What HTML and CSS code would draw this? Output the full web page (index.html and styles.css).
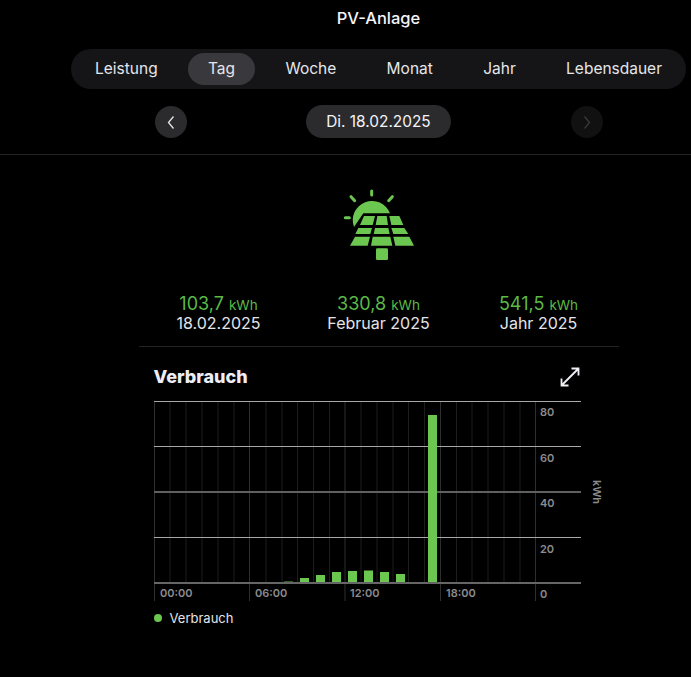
FILE: index.html
```html
<!DOCTYPE html>
<html lang="de">
<head>
<meta charset="utf-8">
<title>PV-Anlage</title>
<link rel="stylesheet" href="styles.css">
</head>
<body>
<div class="column">
  <h1 class="title">PV-Anlage</h1>
  <nav class="tabs">
    <span class="tab">Leistung</span>
    <span class="tab active">Tag</span>
    <span class="tab">Woche</span>
    <span class="tab">Monat</span>
    <span class="tab">Jahr</span>
    <span class="tab">Lebensdauer</span>
  </nav>
  <div class="datebar">
    <span class="round">
      <svg width="32" height="32" viewBox="0 0 32 32"><path class="chev" d="M18.5 10.5 L13.5 16.500 L18.500 22.500"/></svg>
    </span>
    <span class="date">Di. 18.02.2025</span>
    <span class="round off">
      <svg width="32" height="32" viewBox="0 0 32 32"><path class="chev dim" d="M13.500 10.500 L18.500 16.500 L13.500 22.500"/></svg>
    </span>
  </div>
</div>
<hr class="rule">
<div class="column">
  <div class="hero">
    <svg class="panel" width="120" height="90" viewBox="0 0 360 270">
      <path d="M102 141 A55 55 0 1 1 210 100 L130 100 Z"/>
      <path d="M132 108H165L158 135H120Z M172 108H200L204 135H167Z M208 108H238L250 135H214Z M115 144H156L151 162H106Z M165 144H205L209 162H161Z M214 144H253L265 162H220Z M105 170H150L143 197H90Z M158 170H211L217 197H153Z M220 170H268L282 197H226Z"/>
      <rect x="168" y="205" width="36" height="35" rx="4"/>
      <path class="ray" d="M155 33V45 M93 50L104 62 M217 50L206 62 M76 113H88"/>
    </svg>
  </div>
  <div class="body">
    <div class="stats">
      <div class="stat"><div class="val">103,7 <small>kWh</small></div><div class="lab">18.02.2025</div></div>
      <div class="stat"><div class="val">330,8 <small>kWh</small></div><div class="lab">Februar 2025</div></div>
      <div class="stat"><div class="val">541,5 <small>kWh</small></div><div class="lab">Jahr 2025</div></div>
    </div>
    <div class="card">
      <div class="cardhead">
        <h2 class="cardtitle">Verbrauch</h2>
        <svg width="22" height="22" viewBox="0 0 22 22"><path class="expand" d="M2.500 19.500 L19.500 2.500 M12.500 2.500 H19.500 V9.500 M2.500 12.500 V19.500 H9.500"/></svg>
      </div>
      <svg class="chart" width="480" height="204" viewBox="154 400 480 204">
        <g class="vgrid">
          <path d="M170 401V583M186 401V583M202 401V583M218 401V583M234 401V583M266 401V583M282 401V583M297.500 401V583M313.500 401V583M329.500 401V583M361 401V583M377 401V583M393 401V583M408.500 401V583M424.500 401V583M456.500 401V583M472 401V583M488 401V583M504 401V583M520 401V583"/>
        </g>
        <g class="major">
          <path d="M154.500 401V601M249.500 401V601M345 401V601M440.500 401V601M535.500 401V601"/>
        </g>
        <path class="hgrid" d="M154 401.500H581M154 446.500H581M154 537.500H581"/>
        <path class="hgrid mid" d="M154 492H581"/>
        <g class="bars">
          <rect class="faint" x="284" y="581" width="9" height="2"/>
          <rect x="300" y="578" width="9" height="5"/>
          <rect x="316" y="575" width="9" height="8"/>
          <rect x="332" y="572" width="9" height="11"/>
          <rect x="348" y="571" width="9" height="12"/>
          <rect x="364" y="570.500" width="9" height="12.500"/>
          <rect x="380" y="572" width="9" height="11"/>
          <rect x="396" y="574" width="9" height="9"/>
          <rect x="428" y="415" width="9" height="168"/>
        </g>
        <path class="axis" d="M154 583H581"/>
        <g class="ticks">
          <text x="160" y="597">00:00</text>
          <text x="255" y="597">06:00</text>
          <text x="350" y="597">12:00</text>
          <text x="446" y="597">18:00</text>
          <text x="540" y="416">80</text>
          <text x="540" y="462">60</text>
          <text x="540" y="507">40</text>
          <text x="540" y="553">20</text>
          <text x="540" y="598">0</text>
          <text class="unit" transform="translate(593 492) rotate(90)" text-anchor="middle">kWh</text>
        </g>
      </svg>
      <div class="legend"><i class="dot"></i>Verbrauch</div>
    </div>
  </div>
</div>
</body>
</html>
```
FILE: styles.css
```css
* { box-sizing: border-box; }
html, body { margin: 0; background: #000; }
body {
  height: 677px;
  overflow: hidden;
  color: #eeeef2;
  font-family: Inter, "Liberation Sans", sans-serif;
}
.column {
  margin-left: 71px;
  width: 615px;
  display: flex;
  flex-direction: column;
  align-items: center;
}
.title {
  margin: 8px 0 0;
  height: 41px;
  font-size: 16.500px;
  line-height: 20px;
  font-weight: 500;
  color: #f4f4fa;
}
.tabs {
  width: 615px;
  height: 40px;
  padding: 4px;
  display: flex;
  justify-content: space-between;
  background: #151517;
  border-radius: 20px;
}
.tab {
  padding: 0 20px;
  height: 32px;
  line-height: 32px;
  border-radius: 16px;
  font-size: 15.500px;
  color: #e6e6ea;
}
.active { background: #39393d; }
.datebar {
  margin-top: 16px;
  width: 448px;
  display: flex;
  justify-content: space-between;
  align-items: center;
}
.round {
  width: 32px;
  height: 32px;
  border-radius: 50%;
  background: #2b2b2e;
}
.round svg { display: block; }
.off { background: #111112; }
.chev { fill: none; stroke: #e6e6ea; stroke-width: 1.300; }
.dim { stroke: #3a3a3c; }
.date {
  width: 145px;
  height: 33px;
  line-height: 33px;
  text-align: center;
  border-radius: 17px;
  background: #2b2b2e;
  font-size: 15.400px;
  color: #f4f4f8;
}
.rule {
  margin: 16px 0 0;
  height: 1px;
  border: 0;
  background: #222224;
}
.hero { height: 132px; width: 120px; padding: 25px 0 0 1px; }
.panel { display: block; fill: #6cc751; }
.ray { fill: none; stroke: #6cc751; stroke-width: 9; stroke-linecap: round; }
.body { width: 480px; }
.stats {
  display: grid;
  grid-template-columns: repeat(3, 1fr);
  height: 60px;
  border-bottom: 1px solid #222224;
  padding-top: 6px;
}
.stat { text-align: center; }
.val { font-size: 18px; line-height: 22px; color: #5cb946; }
.val small { font-size: 13.500px; }
.lab { font-size: 16px; line-height: 19px; margin-top: -2px; color: #e4e4ea; }
.card { position: relative; }
.cardhead {
  height: 53px;
  width: 427px;
  margin-left: 15px;
  padding-top: 6px;
  display: flex;
  justify-content: space-between;
  align-items: center;
}
.cardtitle { margin: 0; font-size: 18px; font-weight: 800; color: #ecedf6; }
.expand { fill: none; stroke: #f0f0f4; stroke-width: 1.800; }
.chart { display: block; overflow: visible; margin-left: 15px; }
.vgrid path { stroke: #1d1d1d; stroke-width: 1; }
.major path { stroke: #2e2e2e; stroke-width: 1; }
.hgrid { stroke: #a8a8ac; stroke-width: 1; }
.mid { stroke: #606062; stroke-width: 2; }
.axis { stroke: #666; stroke-width: 2; }
.bars rect { fill: #6cc751; }
.bars .faint { fill: #2f5a25; }
.ticks text { font-size: 11px; font-weight: 600; fill: #8c8c8e; }
.ticks .unit { font-size: 11px; }
.legend {
  margin: 4px 0 0 15px;
  display: flex;
  align-items: center;
  gap: 8px;
  height: 20px;
  font-size: 13px;
  color: #e4e4ea;
}
.dot { width: 8px; height: 8px; border-radius: 50%; background: #6cc751; }
```
